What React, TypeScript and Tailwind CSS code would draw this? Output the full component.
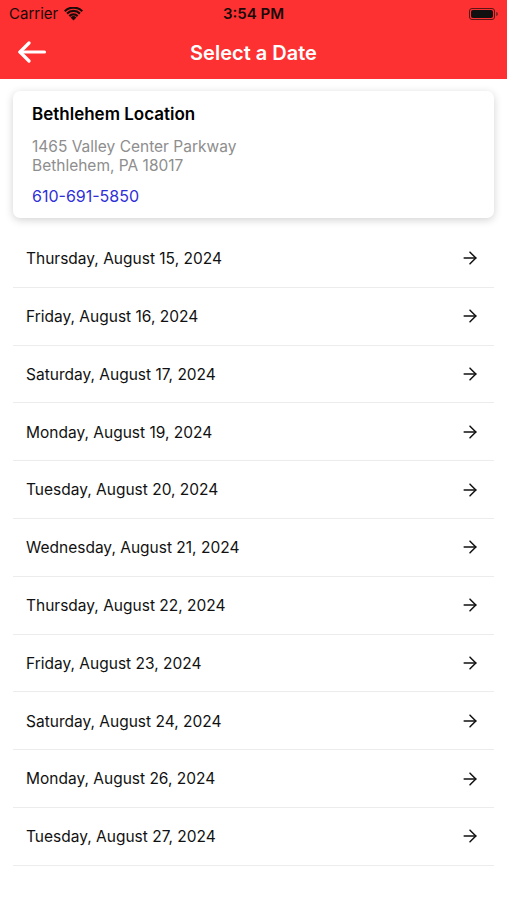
import { ArrowRight } from 'lucide-react'

const dates = [
    'Thursday, August 15, 2024',
    'Friday, August 16, 2024',
    'Saturday, August 17, 2024',
    'Monday, August 19, 2024',
    'Tuesday, August 20, 2024',
    'Wednesday, August 21, 2024',
    'Thursday, August 22, 2024',
    'Friday, August 23, 2024',
    'Saturday, August 24, 2024',
    'Monday, August 26, 2024',
    'Tuesday, August 27, 2024',
]

const StatusBar = () => {
    return (
        <div className="h-[27px] flex items-center justify-between px-[9px] text-[#1a0a0a]">
            <div className="flex items-center gap-[6px] w-[120px]">
                <span className="text-[15px] leading-none">Carrier</span>
                <svg width="19" height="14" viewBox="0 0 19 14">
                    <path d="M9.5 13.5 L6.6 10.4 A4.2 4.2 0 0 1 12.4 10.4 Z" fill="#1a0a0a" />
                    <path d="M4.6 8.3 A7 7 0 0 1 14.4 8.3 L12.9 9.9 A4.9 4.9 0 0 0 6.1 9.9 Z" fill="#1a0a0a" />
                    <path d="M2.3 5.8 A10.3 10.3 0 0 1 16.7 5.8 L15.2 7.4 A8.1 8.1 0 0 0 3.8 7.4 Z" fill="#1a0a0a" />
                    <path d="M0 3.4 A13.6 13.6 0 0 1 19 3.4 L17.5 5 A11.4 11.4 0 0 0 1.5 5 Z" fill="#1a0a0a" />
                </svg>
            </div>
            <span className="text-[15px] font-semibold leading-none">3:54 PM</span>
            <div className="flex items-center justify-end w-[120px]">
                <div className="w-[26px] h-[12px] rounded-[3px] border border-[#5a1515] p-[1px]">
                    <div className="w-full h-full rounded-[2px] bg-[#111]" />
                </div>
                <div className="w-[2px] h-[4px] rounded-r-sm bg-[#8a2020] ml-[1px]" />
            </div>
        </div>
    )
}

const App = () => {
    return (
        <div className="w-[507px] min-h-[900px] bg-white" style={{ fontFamily: 'Inter, "Liberation Sans", Arial, sans-serif' }}>
            <div className="bg-[#fe3132]">
                <StatusBar />
                <div className="h-[52px] flex items-center relative">
                    <div className="absolute left-[17px] top-[14px]">
                        <svg width="30" height="22" viewBox="0 0 30 22" fill="none" stroke="white" strokeWidth="3.2" strokeLinecap="round" strokeLinejoin="round">
                            <path d="M27.5 11 H3" />
                            <path d="M12 2 L3 11 L12 20" />
                        </svg>
                    </div>
                    <h1 className="w-full text-center text-white text-[20px] font-semibold">Select a Date</h1>
                </div>
            </div>

            <div className="px-[13px] pt-[12px]">
                <div className="bg-white rounded-[7px] shadow-[0_2px_8px_rgba(0,0,0,0.18)] px-[19px] pt-[12px] pb-[12px]">
                    <h2 className="text-[17px] font-semibold text-black leading-[22px]">Bethlehem Location</h2>
                    <div className="mt-[12px] text-[15.5px] text-[#8e8e8e] leading-[19px]">
                        <div>1465 Valley Center Parkway</div>
                        <div>Bethlehem, PA 18017</div>
                    </div>
                    <div className="mt-[11px] text-[16px] text-[#2f2fd8] leading-[20px]">610-691-5850</div>
                </div>

                <div className="mt-[12px]">
                    {dates.map((d) => (
                        <div key={d} className="h-[57.8px] flex items-center justify-between pl-[13px] pr-[14px] border-b border-[#ececec]">
                            <span className="text-[15.5px] text-[#111] pt-[1px]">{d}</span>
                            <ArrowRight size={20} strokeWidth={1.8} className="text-[#111]" />
                        </div>
                    ))}
                </div>
            </div>
        </div>
    )
}

export default App
